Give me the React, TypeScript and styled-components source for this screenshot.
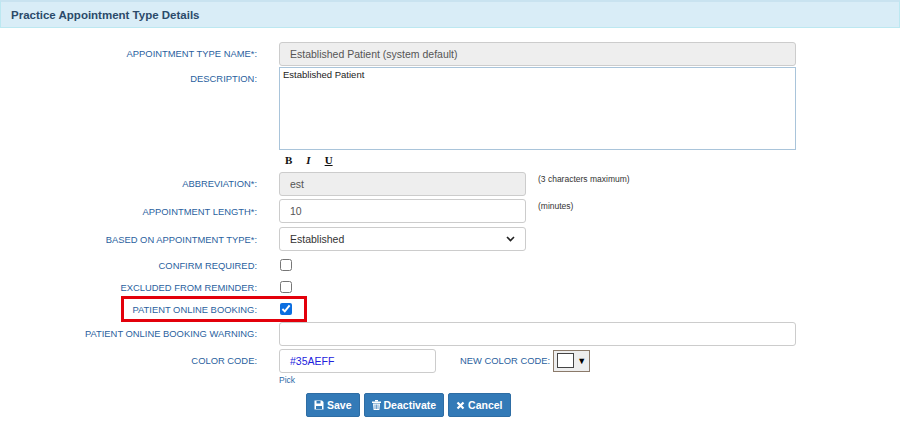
import React from 'react'
import { createGlobalStyle, styled } from 'styled-components'

const Global = createGlobalStyle`
  body { margin: 0; background: #fff; font-family: "Liberation Sans", Arial, sans-serif; }
`

const Panel = styled.div`
  width: 900px;
  height: 440px;
  background: #fff;
`

const Header = styled.div`
  background: #d9edf7;
  border: 1px solid #bce8f1;
  border-top: 2px solid #c9e3f0;
  box-sizing: border-box;
  height: 28px;
  padding: 0 10px;
  display: flex;
  align-items: center;
  font-size: 11.5px;
  font-weight: bold;
  color: #2b4a6a;
`

const Form = styled.div`
  padding-top: 12px;
  display: flex;
  flex-direction: column;
`

const Row = styled.div<{ $h: number; $top?: boolean }>`
  display: flex;
  align-items: ${(p) => (p.$top ? 'flex-start' : 'center')};
  height: ${(p) => p.$h}px;
  position: relative;
`

const Label = styled.div<{ $top?: boolean }>`
  width: 257px;
  text-align: right;
  font-size: 9.4px;
  color: #2a5f9e;
  text-transform: uppercase;
  padding-top: ${(p) => (p.$top ? '6px' : '0')};
  flex-shrink: 0;
`

const Field = styled.div`
  margin-left: 22px;
  display: flex;
  align-items: center;
  gap: 12px;
`

const Input = styled.div<{ $w: number; $disabled?: boolean; $color?: string }>`
  width: ${(p) => p.$w}px;
  height: 24px;
  box-sizing: border-box;
  border: 1px solid #ccc;
  border-radius: 3px;
  background: ${(p) => (p.$disabled ? '#eee' : '#fff')};
  padding: 0 10px;
  display: flex;
  align-items: center;
  justify-content: space-between;
  font-size: 10.5px;
  color: ${(p) => p.$color ?? '#555'};
`

const TextArea = styled.div`
  width: 517px;
  height: 83px;
  box-sizing: border-box;
  border: 1px solid #a9c4da;
  padding: 1px 3px;
  font-size: 9.5px;
  color: #222;
`

const Note = styled.span`
  font-size: 8.5px;
  color: #333;
  align-self: flex-start;
  margin-top: 2px;
`

const Toolbar = styled.div`
  margin-left: 285px;
  display: flex;
  gap: 14px;
  font-family: "Liberation Serif", serif;
  font-weight: bold;
  font-size: 11px;
  color: #111;
  height: 20px;
  align-items: center;
`

const Check = styled.input`
  margin: 0 0 0 1px;
  width: 12px;
  height: 12px;
  accent-color: #0b6ee0;
`

const Highlight = styled.div`
  position: absolute;
  left: 121px;
  top: -1px;
  width: 186px;
  height: 26px;
  border: 3px solid #e3000b;
  box-sizing: border-box;
`

const Swatch = styled.div`
  width: 37px;
  height: 22px;
  box-sizing: border-box;
  border: 1px solid #8b7a6a;
  background: #eee;
  display: flex;
  align-items: center;
  padding: 0 3px;
  gap: 3px;
  font-size: 9px;
`

const SwatchBox = styled.div`
  width: 17px;
  height: 13px;
  border: 1px solid #444;
  background: #fff;
`

const PickLink = styled.div`
  margin-left: 279px;
  font-size: 8.5px;
  color: #2c6aa8;
  height: 14px;
`

const Buttons = styled.div`
  margin-left: 306px;
  display: flex;
  gap: 4px;
  margin-top: 4px;
`

const Button = styled.button`
  height: 24px;
  padding: 0 7px;
  background: #337ab7;
  border: 1px solid #2e6da4;
  border-radius: 2px;
  color: #fff;
  font-family: "Liberation Sans", Arial, sans-serif;
  font-weight: bold;
  font-size: 10.5px;
  display: flex;
  align-items: center;
  gap: 3px;
`

export default function App() {
  return (
    <Panel>
      <Global />
      <Header>Practice Appointment Type Details</Header>
      <Form>
        <Row $h={27}>
          <Label>Appointment Type Name*:</Label>
          <Field><Input $w={517} $disabled>Established Patient (system default)</Input></Field>
        </Row>
        <Row $h={83} $top>
          <Label $top>Description:</Label>
          <Field><TextArea>Established Patient</TextArea></Field>
        </Row>
        <Toolbar><span>B</span><i>I</i><u>U</u></Toolbar>
        <Row $h={27}>
          <Label>Abbreviation*:</Label>
          <Field><Input $w={247} $disabled>est</Input><Note>(3 characters maximum)</Note></Field>
        </Row>
        <Row $h={28}>
          <Label>Appointment Length*:</Label>
          <Field><Input $w={247}>10</Input><Note>(minutes)</Note></Field>
        </Row>
        <Row $h={28}>
          <Label>Based on Appointment Type*:</Label>
          <Field>
            <Input $w={247} $color="#333">Established
              <svg width="9" height="6" viewBox="0 0 9 6"><path d="M1 1l3.5 3.5L8 1" stroke="#222" strokeWidth="1.6" fill="none" /></svg>
            </Input>
          </Field>
        </Row>
        <Row $h={24}>
          <Label>Confirm Required:</Label>
          <Field><Check type="checkbox" readOnly /></Field>
        </Row>
        <Row $h={20}>
          <Label>Excluded From Reminder:</Label>
          <Field><Check type="checkbox" readOnly /></Field>
        </Row>
        <Row $h={24}>
          <Highlight />
          <Label>Patient Online Booking:</Label>
          <Field><Check type="checkbox" checked readOnly /></Field>
        </Row>
        <Row $h={25}>
          <Label>Patient Online Booking Warning:</Label>
          <Field><Input $w={517} /></Field>
        </Row>
        <Row $h={29}>
          <Label>Color Code:</Label>
          <Field>
            <Input $w={157} $color="#2222dd">#35AEFF</Input>
            <Label as="span" style={{ width: 'auto', marginLeft: 12 }}>New Color Code:</Label>
            <Swatch style={{ marginLeft: -9 }}><SwatchBox />▼</Swatch>
          </Field>
        </Row>
        <PickLink>Pick</PickLink>
        <Buttons>
          <Button>
            <svg width="10" height="10" viewBox="0 0 10 10"><path d="M0.5 0.5h7.5l1.5 1.5v7.5h-9z" fill="#fff" /><rect x="2.5" y="1" width="4" height="2.5" fill="#337ab7" /><rect x="2" y="6" width="6" height="3" fill="#337ab7" /></svg>
            Save
          </Button>
          <Button>
            <svg width="9" height="10" viewBox="0 0 9 10"><rect x="0" y="1.5" width="9" height="1.5" fill="#fff" /><rect x="3" y="0" width="3" height="1.5" fill="#fff" /><path d="M1 3.5h7l-0.6 6.5h-5.8z" fill="#fff" /><path d="M3 4.5v4.5M4.5 4.5v4.5M6 4.5v4.5" stroke="#337ab7" strokeWidth="0.7" /></svg>
            Deactivate
          </Button>
          <Button>
            <svg width="9" height="9" viewBox="0 0 9 9"><path d="M1.5 1.5l6 6M7.5 1.5l-6 6" stroke="#fff" strokeWidth="2.2" /></svg>
            Cancel
          </Button>
        </Buttons>
      </Form>
    </Panel>
  )
}
